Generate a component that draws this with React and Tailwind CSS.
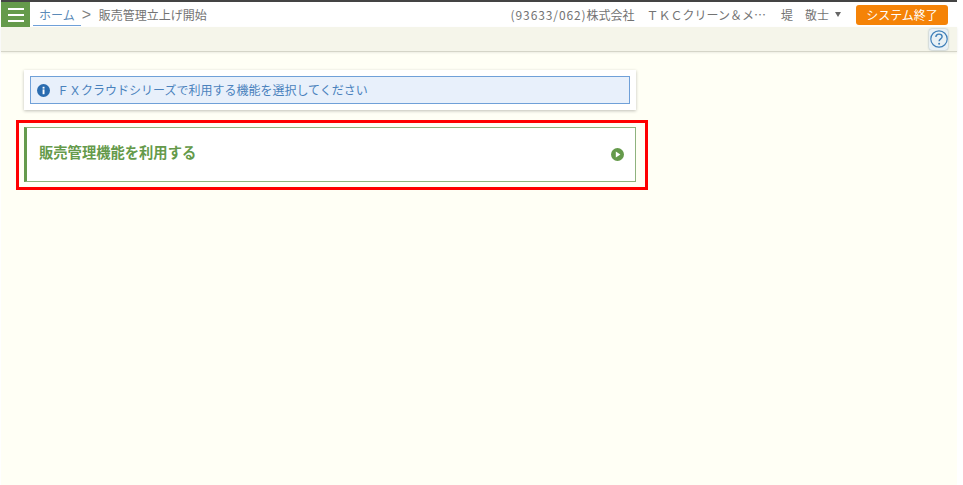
import React from "react";

const font = { fontFamily: '"Noto Sans CJK JP", "Noto Sans", sans-serif' };

export default function App() {
  return (
    <div className="min-h-[485px] w-[963px] bg-white" style={font}>
      <div className="ml-px min-h-[485px] w-[956px] bg-[#fffff5]">
        <header className="border-t-2 border-[#444444]">
          <div className="flex h-[25px] items-center bg-white text-[12px] text-[#737373]">
            <button className="flex h-[25px] w-[29px] flex-col items-center justify-center gap-[4px] bg-[#659a4b]">
              <span className="h-[2px] w-[16px] bg-white" />
              <span className="h-[2px] w-[16px] bg-white" />
              <span className="h-[2px] w-[16px] bg-white" />
            </button>
            <a className="ml-[3px] border-b border-[#6fa0d8] pl-[6px] pr-[6px] leading-[21px] text-[#5a8ab8]">ホーム</a>
            <span className="ml-[1px] w-[17px] text-[16px] font-light leading-[20px] text-[#808080] [font-family:'Liberation_Sans',sans-serif]">&gt;</span>
            <span>販売管理立上げ開始</span>
            <div className="ml-auto flex items-center">
              <span className="whitespace-nowrap">
                <span className="tracking-[0.9px]">(93633/062)</span>株式会社　ＴＫＣクリーン＆メ…
              </span>
              <span className="ml-[15px] whitespace-nowrap">堤　敬士</span>
              <span className="ml-[6px] h-0 w-0 border-x-[3px] border-t-[5px] border-x-transparent border-t-[#666666]" />
              <button className="ml-[15px] mr-[9px] h-[20px] w-[92px] rounded-[3px] bg-[#f58307] text-center text-[12px] leading-[20px] text-white">
                システム終了
              </button>
            </div>
          </div>
          <div className="flex h-[25px] items-center justify-end border-b border-[#d5d5c8] bg-[#f5f5ea] pr-[9px] shadow-[0_1px_2px_rgba(0,0,0,0.08)]">
            <div className="flex h-[21px] w-[19px] items-center justify-center rounded-[3px] bg-[#e9f1f5] shadow-[0_0_2px_rgba(60,100,140,0.6)]">
              <svg width="18" height="18" viewBox="0 0 18 18" fill="none">
                <circle cx="9" cy="9" r="8.2" stroke="#3f7fb8" strokeWidth="1.2" />
                <path d="M5.9 7c0-1.8 1.4-2.9 3.1-2.9 1.7 0 3.1 1.1 3.1 2.6 0 2.1-3 2.2-3 4.5" stroke="#3f7fb8" strokeWidth="1.4" fill="none" />
                <circle cx="9.1" cy="13.8" r="1" fill="#3f7fb8" />
              </svg>
            </div>
          </div>
        </header>

        <main className="pt-[18px]">
          <div className="ml-[23px] w-[612px] bg-white p-[6px] shadow-[0_1px_3px_rgba(0,0,0,0.25)]">
            <div className="flex h-[28px] items-center border border-[#6fa0d8] bg-[#e8f0fb] pl-[6px] text-[12px] text-[#4a82bd]">
              <svg width="13" height="13" viewBox="0 0 13 13" className="shrink-0">
                <circle cx="6.5" cy="6.5" r="6.5" fill="#2a6cb0" />
                <rect x="5.6" y="5.4" width="1.9" height="4.8" fill="#fff" />
                <rect x="5.6" y="2.8" width="1.9" height="1.8" fill="#fff" />
              </svg>
              <span className="ml-[7px] whitespace-nowrap">ＦＸクラウドシリーズで利用する機能を選択してください</span>
            </div>
          </div>

          <div className="ml-[15px] mt-[10px] w-[632px] border-[3px] border-[#ff0000] pb-[5px] pl-[5px] pr-[9px] pt-[4px]">
            <div className="flex h-[55px] items-center justify-between border-y border-r border-l-[3px] border-y-[#8fb37e] border-r-[#8fb37e] border-l-[#659a4b] bg-white pl-[12px] pr-[11px]">
              <span className="whitespace-nowrap pb-[5px] text-[14.3px] font-bold text-[#659a4b]">販売管理機能を利用する</span>
              <svg width="13" height="13" viewBox="0 0 13 13">
                <circle cx="6.5" cy="6.5" r="6.5" fill="#659a4b" />
                <path d="M4.8 3.6 9.4 6.5 4.8 9.4Z" fill="#fff" />
              </svg>
            </div>
          </div>
        </main>
      </div>
    </div>
  );
}
